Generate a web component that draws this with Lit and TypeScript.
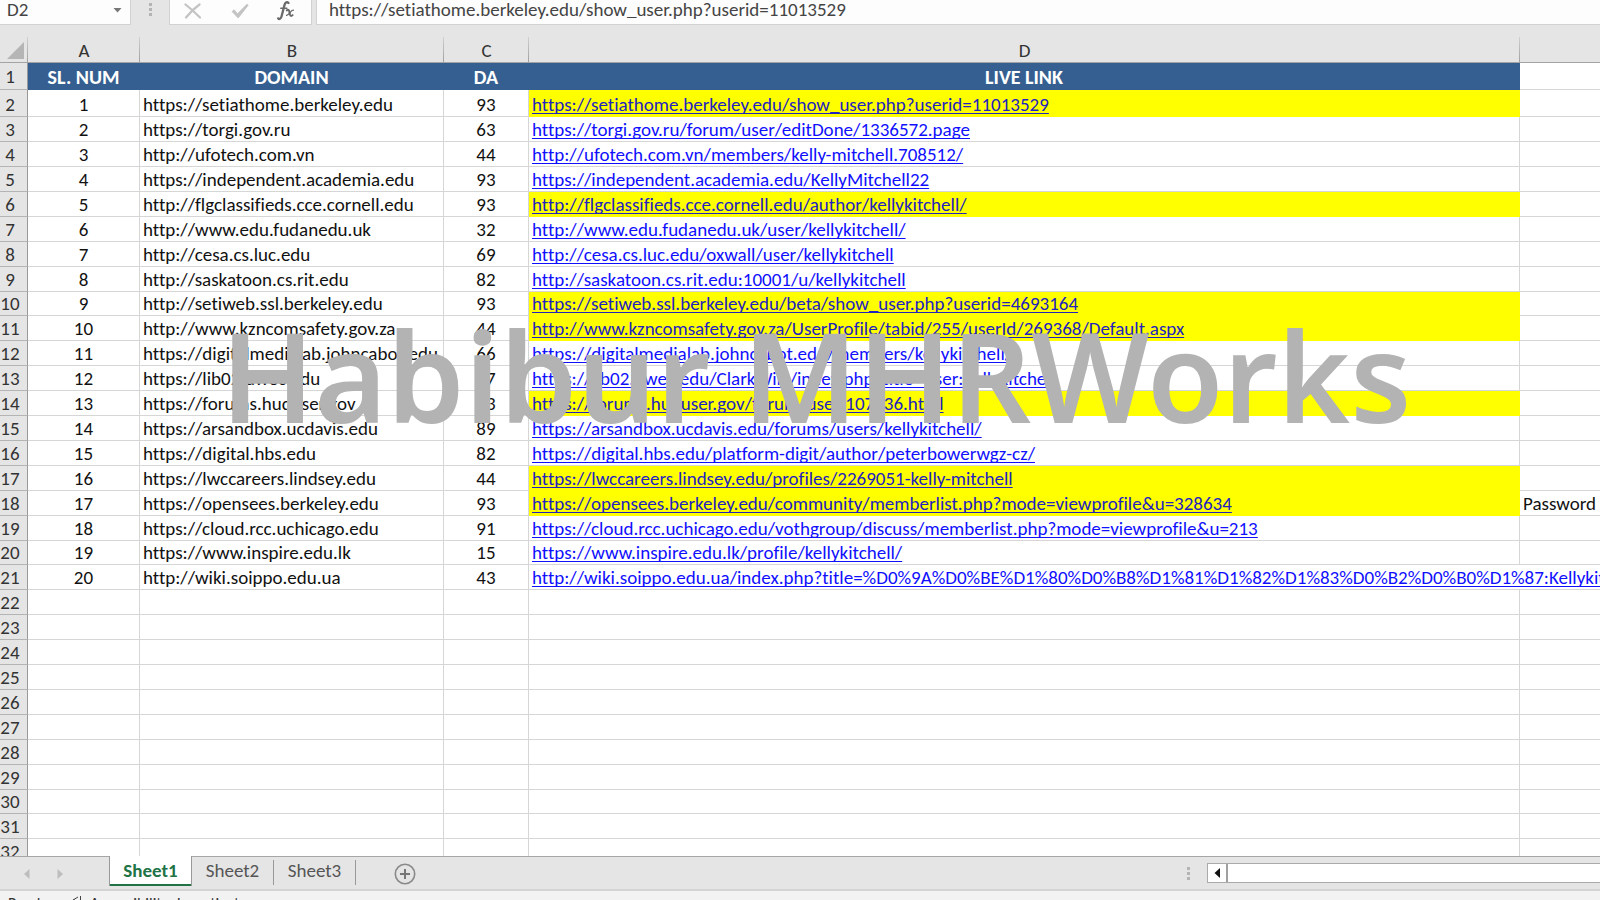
import { LitElement, html, css, svg } from 'lit';
import { customElement, state } from 'lit/decorators.js';
import { classMap } from 'lit/directives/class-map.js';

interface Entry {
  domain: string;
  da: number;
  link: string;
  marked?: boolean;
  note?: string;
  spill?: boolean;
}

const ENTRIES: Entry[] = [
  { domain: 'https://setiathome.berkeley.edu', da: 93, link: 'https://setiathome.berkeley.edu/show_user.php?userid=11013529', marked: true },
  { domain: 'https://torgi.gov.ru', da: 63, link: 'https://torgi.gov.ru/forum/user/editDone/1336572.page' },
  { domain: 'http://ufotech.com.vn', da: 44, link: 'http://ufotech.com.vn/members/kelly-mitchell.708512/' },
  { domain: 'https://independent.academia.edu', da: 93, link: 'https://independent.academia.edu/KellyMitchell22' },
  { domain: 'http://flgclassifieds.cce.cornell.edu', da: 93, link: 'http://flgclassifieds.cce.cornell.edu/author/kellykitchell/', marked: true },
  { domain: 'http://www.edu.fudanedu.uk', da: 32, link: 'http://www.edu.fudanedu.uk/user/kellykitchell/' },
  { domain: 'http://cesa.cs.luc.edu', da: 69, link: 'http://cesa.cs.luc.edu/oxwall/user/kellykitchell' },
  { domain: 'http://saskatoon.cs.rit.edu', da: 82, link: 'http://saskatoon.cs.rit.edu:10001/u/kellykitchell' },
  { domain: 'http://setiweb.ssl.berkeley.edu', da: 93, link: 'https://setiweb.ssl.berkeley.edu/beta/show_user.php?userid=4693164', marked: true },
  { domain: 'http://www.kzncomsafety.gov.za', da: 44, link: 'http://www.kzncomsafety.gov.za/UserProfile/tabid/255/userId/269368/Default.aspx', marked: true },
  { domain: 'https://digitalmedialab.johncabot.edu', da: 66, link: 'https://digitalmedialab.johncabot.edu/members/kellykitchell/' },
  { domain: 'https://lib02.uwec.edu', da: 77, link: 'https://lib02.uwec.edu/ClarkWiki/index.php?title=User:Kellykitchell' },
  { domain: 'https://forums.huduser.gov', da: 93, link: 'https://forums.huduser.gov/forum/user-107436.html', marked: true },
  { domain: 'https://arsandbox.ucdavis.edu', da: 89, link: 'https://arsandbox.ucdavis.edu/forums/users/kellykitchell/' },
  { domain: 'https://digital.hbs.edu', da: 82, link: 'https://digital.hbs.edu/platform-digit/author/peterbowerwgz-cz/' },
  { domain: 'https://lwccareers.lindsey.edu', da: 44, link: 'https://lwccareers.lindsey.edu/profiles/2269051-kelly-mitchell', marked: true },
  { domain: 'https://opensees.berkeley.edu', da: 93, link: 'https://opensees.berkeley.edu/community/memberlist.php?mode=viewprofile&u=328634', marked: true, note: 'Password' },
  { domain: 'https://cloud.rcc.uchicago.edu', da: 91, link: 'https://cloud.rcc.uchicago.edu/vothgroup/discuss/memberlist.php?mode=viewprofile&u=213' },
  { domain: 'https://www.inspire.edu.lk', da: 15, link: 'https://www.inspire.edu.lk/profile/kellykitchell/' },
  { domain: 'http://wiki.soippo.edu.ua', da: 43, link: 'http://wiki.soippo.edu.ua/index.php?title=%D0%9A%D0%BE%D1%80%D0%B8%D1%81%D1%82%D1%83%D0%B2%D0%B0%D1%87:Kellykitchell', spill: true },
];

const EMPTY_ROWS = Array.from({ length: 11 }, (_, i) => ENTRIES.length + 2 + i);
const SHEETS = ['Sheet1', 'Sheet2', 'Sheet3'];

const grip = svg`<rect x="0" y="0" width="3" height="3"/><rect x="0" y="5" width="3" height="3"/><rect x="0" y="10" width="3" height="3"/>`;

@customElement('formula-bar')
export class FormulaBar extends LitElement {
  static styles = css`
    :host { display: flex; height: 25px; color: #444; }
    .box { display: flex; align-items: center; background: #fdfdfd; border: solid #d2d2d2; border-width: 0 1px 1px 0; box-sizing: border-box; }
    .name { width: 131px; }
    .tools { width: 143px; border-left-width: 1px; justify-content: space-between; padding: 0 16px 3px 14px; }
    .formula { flex: 1; margin-left: 4px; border-left-width: 1px; border-right-width: 0; }
    input { width: 100%; min-width: 0; height: 20px; margin: 0 0 4px; padding: 0; border: 0; outline: 0; background: none; color: inherit; font: inherit; font-variant-ligatures: none; line-height: 20px; }
    .name input { padding-left: 7px; }
    .formula input { padding-left: 12px; }
    button { display: flex; margin: 0; padding: 0; border: 0; background: none; }
    .drop { padding: 0 8px 4px 0; }
    .grip { display: flex; align-items: center; flex: 0 0 38px; justify-content: center; padding-bottom: 6px; box-sizing: border-box; fill: #b4b4b4; }
  `;
  render() {
    return html`
      <div class="box name">
        <input aria-label="Name box" .value=${'D2'} />
        <button class="drop" aria-label="Open name list">
          <svg width="9" height="5" viewBox="0 0 9 5"><path d="M0.5 0h8L4.5 4.5z" fill="#777" /></svg>
        </button>
      </div>
      <div class="grip"><svg width="3" height="13">${grip}</svg></div>
      <div class="box tools">
        <button aria-label="Cancel">
          <svg width="18" height="16" viewBox="0 0 18 16"><path d="M1.5 1.5C6 5 11 9.500 16 14.500M15.500 1.500C10.500 5 6 9.500 2 14.500" fill="none" stroke="#c3c3c3" stroke-width="2.200" stroke-linecap="round" /></svg>
        </button>
        <button aria-label="Enter">
          <svg width="18" height="16" viewBox="0 0 18 16"><path d="M1 8.500l2.200-1.700 3.300 4L16 1.200l1.200 1L7.200 15z" fill="#c3c3c3" stroke="#c3c3c3" stroke-width="0.800" stroke-linejoin="round" /></svg>
        </button>
        <button aria-label="Insert function">
          <svg width="18" height="20" viewBox="0 0 18 20" fill="none" stroke="#6a6a6a" stroke-linecap="round">
            <path d="M11.500 2C10.200 0.600 8.400 1.200 7.600 3.600L4.500 15.500C3.900 17.800 2.300 18.600 1.200 17.400" stroke-width="2.300" />
            <path d="M3.800 7.200h6" stroke-width="1.600" />
            <path d="M9.800 9.400c1.600-1.200 2.300-.2 2.700 1.800l.5 2.300c.4 1.600 1.300 1.900 2.600.6" stroke-width="2" />
            <path d="M16.300 9.200c-2.400-.6-3.600 4.600-6.700 5.200" stroke-width="1.400" />
          </svg>
        </button>
      </div>
      <div class="box formula">
        <input aria-label="Formula" .value=${ENTRIES[0].link} />
      </div>
    `;
  }
}

@customElement('sheet-grid')
export class SheetGrid extends LitElement {
  static styles = css`
    :host { display: block; overflow: hidden; background: #fff; color: #111; }
    table { width: 100%; table-layout: fixed; border-collapse: separate; border-spacing: 0; line-height: 22px; }
    .c-num { width: 28px; }
    .c-a { width: 112px; }
    .c-b { width: 304px; }
    .c-c { width: 85px; }
    .c-e { width: 80px; }
    th, td { height: 25px; padding: 0 3px; box-sizing: border-box; vertical-align: bottom; white-space: nowrap; overflow: hidden; font-weight: 400; text-align: left; border: solid #d6d6d6; border-width: 0 1px 1px 0; }
    thead th { height: 26px; text-align: center; color: #333; background: linear-gradient(#d0d0d0, #a0a0a0) right / 1px 100% no-repeat #e5e5e5; border-width: 0 0 1px; border-color: #a3a3a3; }
    thead th:last-child { background: #e5e5e5; }
    .corner { padding: 0 3px 3px 0; }
    .corner svg { display: block; margin-left: auto; }
    tbody th { padding: 0 7px 0 0; text-align: center; color: #333; background: #e5e5e5; border-color: #b4b4b4; border-right-color: #999; }
    tbody tr:nth-child(-n + 2) > * { height: 27px; }
    tbody tr:nth-child(10n) > * { height: 24px; }
    .title { line-height: 24px; }
    .title td { text-align: center; font-size: 20px; font-weight: 700; color: #fff; background: #365f91; border-color: #365f91; }
    .title td:last-child { background: none; border-color: #d6d6d6; }
    .mid { text-align: center; }
    td:last-child { border-right: 0; }
    a { color: #1010ff; text-decoration: underline 1px; text-underline-offset: 2px; text-decoration-skip-ink: none; }
    .marked { background: #ff0; border-color: #ff0; }
    .marked a { color: #2222c0; }
  `;
  render() {
    return html`
      <table>
        <colgroup>
          <col class="c-num" /><col class="c-a" /><col class="c-b" /><col class="c-c" /><col /><col class="c-e" />
        </colgroup>
        <thead>
          <tr>
            <th class="corner" aria-label="Select all"><svg width="18" height="17" viewBox="0 0 18 17"><path d="M17 0v17H0z" fill="#b5b5b5" /></svg></th>
            ${['A', 'B', 'C', 'D', ''].map((c) => html`<th scope="col">${c}</th>`)}
          </tr>
        </thead>
        <tbody>
          <tr class="title">
            <th scope="row">1</th>
            ${['SL. NUM', 'DOMAIN', 'DA', 'LIVE LINK', ''].map((t) => html`<td>${t}</td>`)}
          </tr>
          ${ENTRIES.map((e, i) => html`
            <tr>
              <th scope="row">${i + 2}</th>
              <td class="mid">${i + 1}</td>
              <td>${e.domain}</td>
              <td class="mid">${e.da}</td>
              <td class=${classMap({ marked: !!e.marked })} colspan=${e.spill ? 2 : 1}><a href=${e.link}>${e.link}</a></td>
              ${e.spill ? '' : html`<td>${e.note ?? ''}</td>`}
            </tr>`)}
          ${EMPTY_ROWS.map((n) => html`<tr><th scope="row">${n}</th><td></td><td></td><td></td><td></td><td></td></tr>`)}
        </tbody>
      </table>
    `;
  }
}

@customElement('sheet-tabs')
export class SheetTabs extends LitElement {
  @state() private active = 'Sheet1';
  static styles = css`
    :host { display: flex; height: 33px; background: #e5e5e5; box-sizing: border-box; color: #555; box-shadow: inset 0 1px #a6a6a6; }
    button { margin: 0; padding: 0; border: 0; background: none; color: inherit; font: inherit; }
    .nav { display: flex; align-items: center; gap: 27px; width: 109px; padding: 2px 0 0 24px; box-sizing: border-box; }
    .nav button, .add, .left { display: flex; align-items: center; }
    .tab { width: 82px; height: 25px; margin-top: 4px; padding-bottom: 3px; border-right: 1px solid #999; line-height: 20px; }
    .tab.on { width: 83px; height: 30px; margin: 0; padding: 0; background: #fff; color: #217346; font-weight: 700; border: solid #999; border-width: 0 1px; box-shadow: inset 0 -2px #217346; }
    .add { margin: 3px auto 0 38px; }
    .grip { fill: #b4b4b4; margin: 11px 17px 0 0; }
    .scroll { display: flex; width: 393px; height: 20px; margin-top: 7px; box-sizing: border-box; background: #fff; border: solid #aaa; border-width: 1px 0 1px 1px; }
    .left { justify-content: center; width: 20px; border-right: 2px solid #a0a0a0; }
  `;
  render() {
    return html`
      <div class="nav">
        <button aria-label="Previous sheet"><svg width="6" height="10"><path d="M5.500 0v10L0 5z" fill="#bdbdbd" /></svg></button>
        <button aria-label="Next sheet"><svg width="6" height="10"><path d="M0.500 0v10L6 5z" fill="#bdbdbd" /></svg></button>
      </div>
      ${SHEETS.map((s) => html`<button class=${classMap({ tab: true, on: s === this.active })} @click=${() => (this.active = s)}>${s}</button>`)}
      <button class="add" aria-label="New sheet">
        <svg width="22" height="22" viewBox="0 0 22 22" fill="none" stroke="#8a8a8a"><circle cx="11" cy="11" r="9.700" stroke-width="1.600" /><path d="M11 6v10M6 11h10" stroke="#777" stroke-width="2" /></svg>
      </button>
      <svg class="grip" width="3" height="13">${grip}</svg>
      <div class="scroll">
        <button class="left" aria-label="Scroll left"><svg width="6" height="10"><path d="M6 0v10L0.500 5z" fill="#111" /></svg></button>
      </div>
    `;
  }
}

@customElement('app-root')
export class AppRoot extends LitElement {
  static styles = css`
    :host { position: relative; display: flex; flex-direction: column; height: 100vh; overflow: hidden; background: #e5e5e5; font: 19px/20px Calibri, Carlito, Lato, sans-serif; font-variant-ligatures: none; }
    formula-bar { flex: none; margin-bottom: 12px; }
    sheet-grid { flex: 1; min-height: 0; }
    sheet-tabs { flex: none; }
    .status { display: flex; gap: 8px; flex: none; height: 11px; box-sizing: border-box; padding: 5px 8px 0; overflow: hidden; background: #f2f2f2; border-top: 2px solid #d4d4d4; color: #333; font-size: 16px; line-height: 16px; }
    .ready { width: 56px; }
    .status svg { flex: none; }
    .watermark { position: absolute; top: 313px; left: 0; right: 0; padding-left: 32px; text-align: center; white-space: nowrap; pointer-events: none; color: #b3b3b3; font: 600 124px/124px "Noto Sans", "Open Sans", sans-serif; }
  `;
  render() {
    return html`
      <formula-bar></formula-bar>
      <sheet-grid></sheet-grid>
      <sheet-tabs></sheet-tabs>
      <div class="status">
        <span class="ready">Ready</span>
        <svg width="10" height="14" viewBox="0 0 10 14" fill="none" stroke="#444"><path d="M8.500 0v6M1 4l5-3M2 3v8" /></svg>
        <span>Accessibility: Investigate</span>
      </div>
      <div class="watermark">Habibur MHRWorks</div>
    `;
  }
}
